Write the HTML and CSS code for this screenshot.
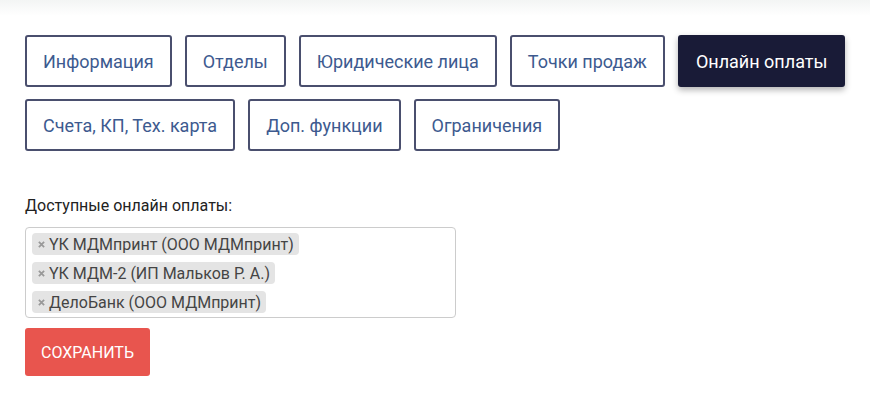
FILE: index.html
```html
<!DOCTYPE html>
<html lang="ru">
<head>
    <meta charset="UTF-8">
    <title>Онлайн оплаты</title>
    <link rel="stylesheet" href="styles.css">
</head>
<body>
<div class="top-shadow"></div>
<div class="page">
    <div class="tabs">
        <a href="#" class="tab">Информация</a>
        <a href="#" class="tab">Отделы</a>
        <a href="#" class="tab">Юридические лица</a>
        <a href="#" class="tab">Точки продаж</a>
        <a href="#" class="tab active">Онлайн оплаты</a>
        <a href="#" class="tab">Счета, КП, Тех. карта</a>
        <a href="#" class="tab">Доп. функции</a>
        <a href="#" class="tab">Ограничения</a>
    </div>

    <div class="field">
        <label class="field-label">Доступные онлайн оплаты:</label>
        <div class="multiselect">
            <span class="chip"><svg class="chip-x" viewBox="0 0 8 8"><path d="M1 1L7 7M7 1L1 7"/></svg>ҮК МДМпринт (ООО МДМпринт)</span>
            <span class="chip"><svg class="chip-x" viewBox="0 0 8 8"><path d="M1 1L7 7M7 1L1 7"/></svg>ҮК МДМ-2 (ИП Мальков Р. А.)</span>
            <span class="chip"><svg class="chip-x" viewBox="0 0 8 8"><path d="M1 1L7 7M7 1L1 7"/></svg>ДелоБанк (ООО МДМпринт)</span>
        </div>
    </div>

    <button class="btn-save">Сохранить</button>
</div>
</body>
</html>
```

FILE: styles.css
```css
* {
    margin: 0;
    padding: 0;
    box-sizing: border-box;
}

body {
    font-family: Roboto, "Noto Sans", sans-serif;
    background: #fff;
    color: #333;
}

.top-shadow {
    height: 16px;
    background: linear-gradient(to bottom, #f3f5f4, #fff);
}

.page {
    padding: 19px 15px 0 25px;
}

.tabs {
    display: flex;
    flex-wrap: wrap;
    column-gap: 13px;
    row-gap: 12px;
}

.tab {
    display: inline-flex;
    align-items: center;
    height: 52px;
    padding: 0 16px;
    border: 2px solid #4a4f6e;
    border-radius: 3px;
    font-size: 18px;
    color: #3d5a8f;
    text-decoration: none;
    background: #fff;
}

.tab.active {
    background: #191b37;
    border-color: #191b37;
    color: #fff;
    box-shadow: 0 3px 6px rgba(0, 0, 0, .3);
}

.field {
    margin-top: 45px;
}

.field-label {
    display: block;
    font-size: 16px;
    line-height: 19px;
    color: #222;
    margin-bottom: 12px;
}

.multiselect {
    width: 431px;
    border: 1px solid #ccc;
    border-radius: 4px;
    padding: 5px 6px 4px;
    display: flex;
    flex-direction: column;
    align-items: flex-start;
    gap: 7px;
}

.chip {
    display: inline-flex;
    align-items: center;
    height: 22px;
    padding: 0 5px 0 6px;
    background: #e4e4e4;
    border-radius: 4px;
    font-size: 16px;
    color: #444;
}

.chip-x {
    width: 7px;
    height: 7px;
    margin-right: 4px;
    stroke: #999;
    stroke-width: 2;
    fill: none;
}

.btn-save {
    margin-top: 10px;
    height: 48px;
    padding: 0 16px;
    border: none;
    border-radius: 3px;
    background: #e8554e;
    color: #fff;
    font-family: Roboto, sans-serif;
    font-size: 16px;
    text-transform: uppercase;
}
```
